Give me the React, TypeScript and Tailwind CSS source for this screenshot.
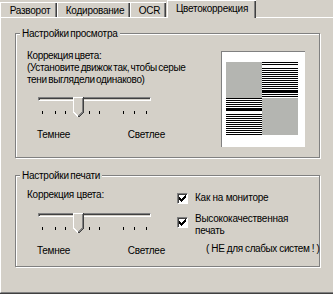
import React from "react";

const TICKS = [4, 17, 27, 39, 51, 61, 85, 96, 108];

// stripe rows of the preview pattern (true = black line)
const TOP_RIGHT = Array.from({ length: 36 }, (_, i) => (i % 2 === 0 || i === 29) && i !== 4);
const BOTTOM_LEFT = Array.from({ length: 37 }, (_, i) => (i % 2 === 0 || i === 11) && i !== 14);

function Thumb() {
  return (
    <svg width="11" height="21" viewBox="0 0 11 21" shapeRendering="crispEdges">
      <polygon points="0,0 11,0 11,15 5.5,20.5 0,15" fill="#d4d0c8" />
      <polyline points="0.5,15 0.5,0.5 10,0.5" fill="none" stroke="#ffffff" />
      <line x1="0.5" y1="15" x2="5.5" y2="20" stroke="#ffffff" />
      <polyline points="10.5,0 10.5,15 5.5,20" fill="none" stroke="#404040" />
      <polyline points="9.5,1 9.5,15 5.5,19" fill="none" stroke="#808080" />
    </svg>
  );
}

function Slider() {
  return (
    <div className="relative w-[113px] h-[25px]">
      <div className="mt-[7px] h-[4px] border border-[#808080] border-r-white border-b-white shadow-[inset_1px_1px_0_#404040]" />
      <svg width="113" height="3" className="mt-[10px] block" shapeRendering="crispEdges">
        {TICKS.map((x) => (
          <rect key={x} x={x} y={0} width={1} height={3} fill="#000" />
        ))}
      </svg>
      <div className="absolute top-0 left-[35px]">
        <Thumb />
      </div>
    </div>
  );
}

function Checkbox() {
  return (
    <div className="w-[11px] h-[11px] shrink-0 border border-[#808080] border-r-white border-b-white">
      <div className="w-full h-full bg-white shadow-[inset_1px_1px_0_#404040] pl-[1px] pt-[1px]">
        <svg width="7" height="7" viewBox="0 0 7 7" className="block" shapeRendering="crispEdges">
          <path
            d="M6 0h1v3h-1zM5 1h1v3h-1zM4 2h1v3h-1zM0 2h1v3h-1zM1 3h1v3h-1zM2 4h1v3h-1zM3 3h1v3h-1z"
            fill="#000"
          />
        </svg>
      </div>
    </div>
  );
}

function Group({ title, className, children }: { title: string; className: string; children: React.ReactNode }) {
  return (
    <div className={`relative flex border border-[#808080] shadow-[inset_1px_1px_0_#fff,1px_1px_0_#fff] ${className}`}>
      <span className="absolute left-[4px] top-[-7px] bg-[#d4d0c8] px-[2px] leading-[13px] [word-spacing:-1px]">{title}</span>
      {children}
    </div>
  );
}

function Preview() {
  return (
    <div className="shrink-0 mt-[17px] w-[84px] h-[96px] border-l border-t border-[#808080] bg-white pl-[4px] pt-[10px]">
      <svg width="72" height="73" className="block" shapeRendering="crispEdges">
        <rect x={0} y={0} width={36} height={36} fill="#b4b5b1" />
        {TOP_RIGHT.map((b, i) => (
          <rect key={"t" + i} x={36} y={i} width={36} height={1} fill={b ? "#000" : "#fff"} />
        ))}
        {BOTTOM_LEFT.map((b, i) => (
          <rect key={"b" + i} x={0} y={36 + i} width={36} height={1} fill={b ? "#000" : "#fff"} />
        ))}
        <rect x={36} y={36} width={36} height={37} fill="#b4b5b1" />
      </svg>
    </div>
  );
}

const TABS = [
  { label: "Разворот", w: "w-[57px]" },
  { label: "Кодирование", w: "w-[73px]" },
  { label: "OCR", w: "w-[36px]" },
];

export default function App() {
  return (
    <div className="w-[333px] h-[294px] overflow-hidden bg-[#d4d0c8] text-black text-[10px] tracking-[-0.25px] leading-[13px] font-['Liberation_Sans',Arial,sans-serif]">
      <div className="flex items-end h-[17px]">
        {TABS.map((t) => (
          <div
            key={t.label}
            className={`${t.w} h-[15px] flex justify-center pl-[2px] pt-[1px] border-t border-l border-white shadow-[inset_-1px_0_0_#404040,inset_-2px_0_0_#808080]`}
          >
            {t.label}
          </div>
        ))}
        <div className="relative z-10 ml-[1px] w-[89px] h-[18px] mb-[-1px] flex justify-center pt-[1px] bg-[#d4d0c8] border-t border-l border-white shadow-[inset_-1px_0_0_#404040,inset_-2px_0_0_#808080]">
          Цветокоррекция
        </div>
      </div>

      <div className="w-[340px] h-[276px] border border-white border-r-[#808080] border-b-[#808080] shadow-[0_1px_0_#404040] pl-[14px] pt-[15px]">
        <Group title="Настройки просмотра" className="w-[305px] h-[125px]">
          <div className="shrink-0 w-[205px] pl-[11px] pt-[16px]">
            <div className="leading-[12px] [word-spacing:-1px] tracking-[-0.35px]">
              <div>Коррекция цвета:</div>
              <div>(Установите движок так, чтобы серые</div>
              <div>тени выглядели одинаково)</div>
            </div>
            <div className="mt-[11px] ml-[11px]">
              <Slider />
            </div>
            <div className="mt-[6px] ml-[10px] w-[128px] flex justify-between">
              <span>Темнее</span>
              <span>Светлее</span>
            </div>
          </div>
          <Preview />
        </Group>

        <Group title="Настройки печати" className="mt-[17px] w-[305px] h-[92px]">
          <div className="shrink-0 w-[161px] pl-[11px] pt-[13px]">
            <div className="leading-[12px]">Коррекция цвета:</div>
            <div className="mt-[12px] ml-[11px]">
              <Slider />
            </div>
            <div className="mt-[6px] ml-[10px] w-[128px] flex justify-between">
              <span>Темнее</span>
              <span>Светлее</span>
            </div>
          </div>
          <div className="shrink-0 pt-[16px] leading-[12px]">
            <div className="flex items-start gap-[7px]">
              <div className="mt-[1px]">
                <Checkbox />
              </div>
              <span>Как на мониторе</span>
            </div>
            <div className="mt-[9px] flex items-start gap-[7px]">
              <div className="mt-[4px]">
                <Checkbox />
              </div>
              <span>
                Высококачественная
                <br />
                печать
              </span>
            </div>
            <div className="mt-[6px] ml-[29px] whitespace-nowrap tracking-[-0.4px]">( НЕ для слабых систем ! )</div>
          </div>
        </Group>
      </div>
    </div>
  );
}
